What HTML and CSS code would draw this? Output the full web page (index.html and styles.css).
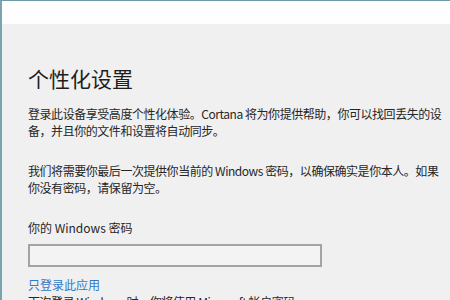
FILE: index.html
```html
<!DOCTYPE html>
<html lang="zh-CN">

<head>
  <meta charset="UTF-8">
  <meta name="viewport" content="width=device-width, initial-scale=1.0">
  <title>个性化设置</title>
  <link rel="stylesheet" href="styles.css">
</head>

<body>
  <div class="window">
    <div class="titlebar"></div>

    <div class="content">
      <h1 class="heading">个性化设置</h1>

      <p class="text">登录此设备享受高度个性化体验。Cortana 将为你提供帮助，你可以找回丢失的设<br>备，并且你的文件和设置将自动同步。</p>

      <p class="text">我们将需要你最后一次提供你当前的 Windows 密码，以确保确实是你本人。如果<br>你没有密码，请保留为空。</p>

      <label class="field-label" for="password">你的 Windows 密码</label>
      <input id="password" class="field" type="password">

      <a class="link" href="#">只登录此应用</a>
      <p class="text note">下次登录 Windows 时，你将使用 Microsoft 帐户密码。</p>
    </div>
  </div>
</body>

</html>
```

FILE: styles.css
```css
* {
  margin: 0;
  padding: 0;
  box-sizing: border-box;
  font-family: 'Noto Sans CJK SC', 'Noto Sans', sans-serif;
}

body {
  width: 450px;
  height: 300px;
  overflow: hidden;
  background: #f0f0f0;
  color: #262626;
}

.window {
  height: 100%;
  border-top: 1px solid #6f9ba6;
  border-left: 2px solid #7aa3ad;
  display: flex;
  flex-direction: column;
}

.titlebar {
  height: 23px;
  background: #fefefe;
  flex-shrink: 0;
}

.content {
  flex: 1;
  min-height: 0;
  padding: 40px 0 0 26px;
  display: flex;
  flex-direction: column;
  align-items: flex-start;
}

.heading {
  font-size: 21px;
  font-weight: normal;
  line-height: 28px;
  color: #1e1e1e;
  margin-bottom: 13px;
}

.text {
  white-space: nowrap;
  font-size: 12px;
  line-height: 17px;
  letter-spacing: -0.45px;
  margin-bottom: 23px;
}

.field-label {
  font-size: 12px;
  line-height: 17px;
  margin-bottom: 8px;
}

.field {
  width: 294px;
  height: 23px;
  flex-shrink: 0;
  border: 2px solid #a3a3a3;
  background: #f3f3f3;
  outline: none;
  margin-bottom: 9px;
}

.link {
  font-size: 12px;
  line-height: 17px;
  color: #2f79c9;
  text-decoration: none;
}

.note {
  margin-bottom: 0;
}
```
